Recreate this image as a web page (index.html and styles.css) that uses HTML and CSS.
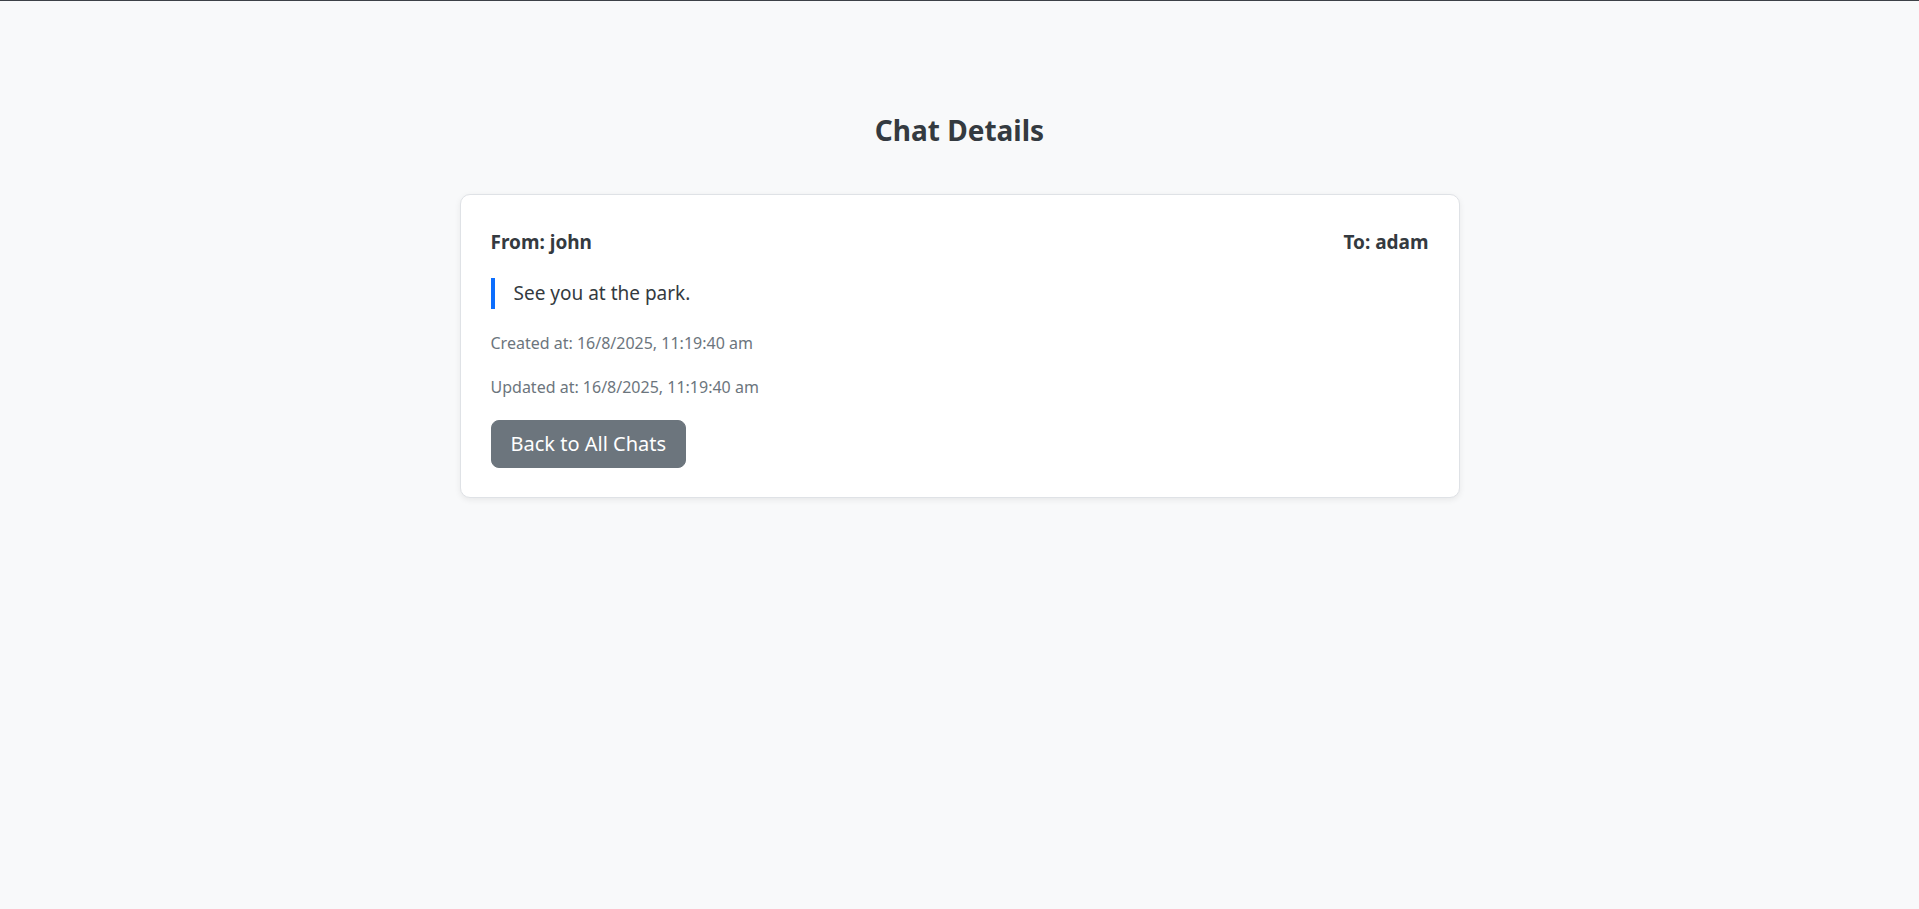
FILE: index.html
```html
<!DOCTYPE html>
<html lang="en">
<head>
<meta charset="utf-8">
<title>Chat Details</title>
<link rel="stylesheet" href="styles.css">
</head>
<body>
<div class="topline"></div>
<main class="container">
  <h3 class="page-title">Chat Details</h3>
  <section class="card">
    <div class="card-head">
      <h5 class="party">From: john</h5>
      <h5 class="party">To: adam</h5>
    </div>
    <p class="message">See you at the park.</p>
    <p class="meta">Created at: 16/8/2025, 11:19:40 am</p>
    <p class="meta">Updated at: 16/8/2025, 11:19:40 am</p>
    <a class="btn" href="#">Back to All Chats</a>
  </section>
</main>
</body>
</html>
```
FILE: styles.css
```css
* { box-sizing: border-box; }
html, body { margin: 0; padding: 0; }
body {
  background: #f8f9fa;
  font-family: "Noto Sans", "Open Sans", sans-serif;
  font-size: 16px;
  line-height: 1.5;
  color: #212529;
  min-height: 909px;
}
.topline { height: 1px; background: #3d4147; }
.container {
  max-width: 1000px;
  margin: 0 auto;
  padding-top: 113px;
}
.page-title {
  margin: 0 0 46px;
  text-align: center;
  font-size: 28px;
  line-height: 1.2;
  font-weight: 700;
  color: #343a40;
}
.card {
  background: #fff;
  border: 1px solid #dfe2e6;
  border-radius: 10px;
  box-shadow: 0 2px 6px rgba(0, 0, 0, 0.07);
  padding: 35px 30px 29px;
}
.card-head {
  display: flex;
  justify-content: space-between;
  margin-bottom: 24px;
}
.party {
  margin: 0;
  font-size: 19px;
  line-height: 24px;
  font-weight: 700;
  color: #343a40;
}
.message {
  margin: 0 0 22px;
  border-left: 4px solid #0d6efd;
  padding-left: 19px;
  font-size: 19px;
  line-height: 31px;
  color: #343a40;
}
.meta {
  margin: 0 0 20px;
  font-size: 16px;
  line-height: 24px;
  color: #6c757d;
}
.meta + .btn { margin-top: 1px; }
.btn {
  display: inline-block;
  padding: 8px 19px;
  font-size: 20px;
  line-height: 30px;
  color: #fff;
  background: #6c757d;
  border: 1px solid #6c757d;
  border-radius: 8px;
  text-decoration: none;
}
```
